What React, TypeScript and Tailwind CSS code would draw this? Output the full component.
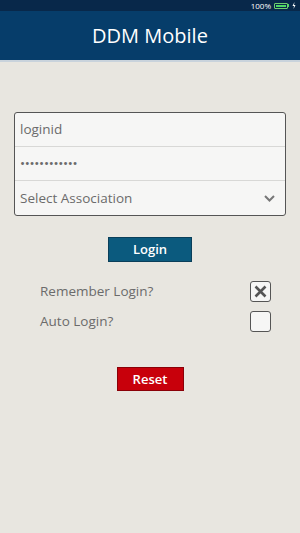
import { useState } from 'react';

export default function App() {
    const [remember, setRemember] = useState(true);
    const [autoLogin, setAutoLogin] = useState(false);

    return (
        <div
            className="w-[300px] h-[533px] bg-[#e8e6e0] flex flex-col overflow-hidden"
            style={{ fontFamily: '"Open Sans", "Noto Sans", sans-serif' }}
        >
            <div className="h-[11px] bg-[#08284a] flex items-center justify-end pr-[4px] gap-[3px]">
                <span className="text-[8px] leading-none text-white">100%</span>
                <div className="flex items-center">
                    <div className="w-[14px] h-[6px] border border-[#6fcf6f] rounded-[1px] p-[1px]">
                        <div className="w-full h-full bg-[#4cd964]" />
                    </div>
                    <div className="w-[1px] h-[3px] bg-[#4cd964]" />
                </div>
                <svg width="4" height="7" viewBox="0 0 4 7">
                    <path d="M2.5 0 L0.5 4 H2 L1.5 7 L3.5 3 H2 Z" fill="#ffffff" />
                </svg>
            </div>
            <header className="h-[51px] bg-[#063d6a] flex items-center justify-center border-b-2 border-[#c9d3dc]">
                <h1 className="text-[20px] text-white leading-none">DDM Mobile</h1>
            </header>

            <main className="flex flex-col items-center pt-[50px]">
                <div className="w-[272px] border border-[#555] rounded-[3px] bg-[#f6f6f5] overflow-hidden">
                    <div className="h-[34px] flex items-center px-[5px] border-b border-[#d8d8d6] text-[13.5px] text-[#6b6b6b]">
                        loginid
                    </div>
                    <div className="h-[34px] flex items-center px-[5px] border-b border-[#d8d8d6] text-[13.5px] text-[#6b6b6b] tracking-[-0.3px]">
                        ••••••••••••
                    </div>
                    <div className="h-[34px] flex items-center justify-between pl-[5px] pr-[10px] text-[13.5px] text-[#6b6b6b]">
                        <span>Select Association</span>
                        <svg width="11" height="7" viewBox="0 0 11 7">
                            <path d="M1 1 L5.5 5.5 L10 1" stroke="#777" strokeWidth="2" fill="none" />
                        </svg>
                    </div>
                </div>

                <button className="mt-[21px] w-[84px] h-[25px] bg-[#0b5a7e] border border-[#0a3f5a] text-white text-[13px] font-semibold leading-none">
                    Login
                </button>

                <div className="w-[272px] pl-[26px] pr-[15px] mt-[19px] flex flex-col gap-[9px]">
                    <div className="flex items-center justify-between">
                        <span className="text-[13.5px] text-[#6b6b6b]">Remember Login?</span>
                        <button
                            onClick={() => setRemember(!remember)}
                            className="w-[21px] h-[21px] border border-[#555] rounded-[3px] bg-[#f6f6f5] flex items-center justify-center"
                        >
                            {remember && (
                                <svg width="13" height="13" viewBox="0 0 13 13">
                                    <path d="M1.5 1.5 L11.5 11.5 M11.5 1.5 L1.5 11.5" stroke="#555" strokeWidth="2.6" />
                                </svg>
                            )}
                        </button>
                    </div>
                    <div className="flex items-center justify-between">
                        <span className="text-[13.5px] text-[#6b6b6b]">Auto Login?</span>
                        <button
                            onClick={() => setAutoLogin(!autoLogin)}
                            className="w-[21px] h-[21px] border border-[#555] rounded-[3px] bg-[#f6f6f5] flex items-center justify-center"
                        >
                            {autoLogin && (
                                <svg width="13" height="13" viewBox="0 0 13 13">
                                    <path d="M1.5 1.5 L11.5 11.5 M11.5 1.5 L1.5 11.5" stroke="#555" strokeWidth="2.6" />
                                </svg>
                            )}
                        </button>
                    </div>
                </div>

                <button className="mt-[35px] w-[67px] h-[24px] bg-[#c8000b] border border-[#8a0008] text-white text-[13px] font-semibold leading-none">
                    Reset
                </button>
            </main>
        </div>
    );
}
